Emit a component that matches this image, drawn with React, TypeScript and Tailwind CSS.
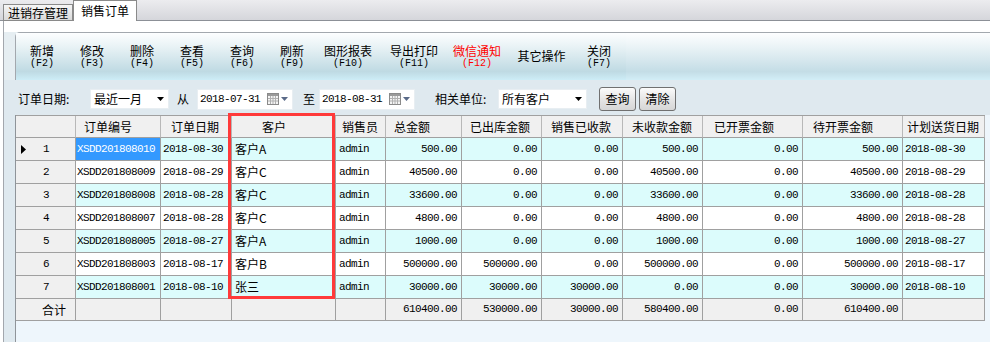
import React from "react";

const CJK = "font-['Noto_Sans_CJK_SC',sans-serif]";
const MONO = "font-['Liberation_Mono','Noto_Sans_CJK_SC',monospace] text-[11px] tracking-[-0.6px]";

const TOOLS = [
  { label: "新增", key: "(F2)", w: "w-[50px]" },
  { label: "修改", key: "(F3)", w: "w-[50px]" },
  { label: "删除", key: "(F4)", w: "w-[50px]" },
  { label: "查看", key: "(F5)", w: "w-[50px]" },
  { label: "查询", key: "(F6)", w: "w-[50px]" },
  { label: "刷新", key: "(F9)", w: "w-[50px]" },
  { label: "图形报表", key: "(F10)", w: "w-[62px]" },
  { label: "导出打印", key: "(F11)", w: "w-[70px]" },
  { label: "微信通知", key: "(F12)", w: "w-[56px]", red: true },
  { label: "其它操作", key: "", w: "w-[73px]" },
  { label: "关闭", key: "(F7)", w: "w-[42px]" },
];

const HEADERS = [
  { t: "", pl: "pl-0" },
  { t: "订单编号", pl: "pl-[8px]" },
  { t: "订单日期", pl: "pl-[10px]" },
  { t: "客户", pl: "pl-[30px]" },
  { t: "销售员", pl: "pl-[6px]" },
  { t: "总金额", pl: "pl-[8px]" },
  { t: "已出库金额", pl: "pl-[8px]" },
  { t: "销售已收款", pl: "pl-[9px]" },
  { t: "未收款金额", pl: "pl-[9px]" },
  { t: "已开票金额", pl: "pl-[11px]" },
  { t: "待开票金额", pl: "pl-[10px]" },
  { t: "计划送货日期", pl: "pl-[4px]" },
];

const ROWS = [
  ["XSDD201808010", "2018-08-30", "客户A", "500.00", "0.00", "0.00", "500.00", "0.00", "500.00", "2018-08-30"],
  ["XSDD201808009", "2018-08-29", "客户C", "40500.00", "0.00", "0.00", "40500.00", "0.00", "40500.00", "2018-08-29"],
  ["XSDD201808008", "2018-08-28", "客户C", "33600.00", "0.00", "0.00", "33600.00", "0.00", "33600.00", "2018-08-28"],
  ["XSDD201808007", "2018-08-28", "客户C", "4800.00", "0.00", "0.00", "4800.00", "0.00", "4800.00", "2018-08-28"],
  ["XSDD201808005", "2018-08-27", "客户A", "1000.00", "0.00", "0.00", "1000.00", "0.00", "1000.00", "2018-08-27"],
  ["XSDD201808003", "2018-08-17", "客户B", "500000.00", "500000.00", "0.00", "500000.00", "0.00", "500000.00", "2018-08-17"],
  ["XSDD201808001", "2018-08-10", "张三", "30000.00", "30000.00", "30000.00", "0.00", "0.00", "30000.00", "2018-08-10"],
];

const TOTALS = ["610400.00", "530000.00", "30000.00", "580400.00", "0.00", "610400.00"];

const GRID =
  "grid grid-cols-[60px_85px_71px_104px_50px_76px_80px_81px_80px_100px_100px_82px]";
const CELL = "border-r border-b border-[#a0a0a0] flex items-center overflow-hidden whitespace-nowrap";

function DownArrow({ color = "#000" }: { color?: string }) {
  return (
    <svg width="7" height="4" viewBox="0 0 7 4">
      <path d="M0 0H7L3.5 4Z" fill={color} />
    </svg>
  );
}

function CalendarIcon() {
  return (
    <span className="flex items-center gap-[2px]">
      <svg width="12" height="12" viewBox="0 0 12 12">
        <rect x="0.5" y="0.5" width="11" height="11" fill="#f4f4f4" stroke="#8a8a8a" />
        <rect x="1" y="1" width="10" height="2" fill="#9a9a9a" />
        <path d="M1 5.5H11M1 8H11M3.5 3V11M6 3V11M8.5 3V11" stroke="#b0b0b0" strokeWidth="1" />
      </svg>
      <DownArrow color="#5a6a88" />
    </span>
  );
}

function Select({ text, w }: { text: string; w: string }) {
  return (
    <div className={`${w} h-[20px] bg-white border border-[#e8eef2] flex items-center justify-between pl-[3px] pr-[4px]`}>
      <span className={`${CJK} text-[12px]`}>{text}</span>
      <DownArrow />
    </div>
  );
}

function DateBox({ value }: { value: string }) {
  return (
    <div className="w-[96px] h-[21px] bg-white border border-[#e8eef2] flex items-center justify-between pl-[2px] pr-[4px]">
      <span className={MONO}>{value}</span>
      <CalendarIcon />
    </div>
  );
}

function Btn({ text }: { text: string }) {
  return (
    <button className="w-[37px] h-[24px] rounded-[3px] border border-[#707070] bg-[linear-gradient(to_bottom,#fbfbfb,#e4e4e4_55%,#d6d6d6)] flex items-center justify-center">
      <span className={`${CJK} text-[12px]`}>{text}</span>
    </button>
  );
}

export default function App() {
  return (
    <div className={`w-[990px] h-[342px] overflow-hidden bg-white flex flex-col text-[12px] text-black ${CJK}`}>
      {/* tabs */}
      <div className="h-[21px] shrink-0 flex items-end bg-[linear-gradient(to_bottom,#ececef,#d5d6db)] border-b border-[#8c9097] pl-[3px]">
        <div className="h-[17px] mb-[-1px] px-[4px] border border-[#8a8a8a] bg-[linear-gradient(to_bottom,#f6f6f6,#d9d9d9)] flex items-center">
          <span className="text-[12px] leading-none">进销存管理</span>
        </div>
        <div className="h-[21px] mb-[-1px] w-[64px] border border-b-0 border-[#8a8a8a] bg-white flex items-center justify-center">
          <span className="text-[12px] leading-none">销售订单</span>
        </div>
      </div>

      <div className="flex flex-1 min-h-0">
        <div className="w-[3px] bg-white" />
        <div className="flex-1 flex flex-col border-l border-[#a3a7ad] bg-[#e2ecf1] min-h-0">
          <div className="h-[11px] bg-white shrink-0" />
          {/* toolbar */}
          <div className="pl-[11px] bg-[#e6eef2] shrink-0">
            <div className="h-[48px] rounded-tl-[5px] border-t border-l border-[#a3a8ae] flex bg-[linear-gradient(to_bottom,#fdfeff_0%,#eaf3f6_30%,#c4dde6_82%,#d2eef7_100%)]">
              <div className="flex pl-[1px] w-[610px] bg-[linear-gradient(to_bottom,#fdfeff_0%,#e8f2f5_30%,#bfdae3_82%,#cdedf7_100%)]">
                {TOOLS.map((t) => (
                  <div
                    key={t.label}
                    className={`${t.w} h-full flex flex-col items-center justify-center ${t.red ? "text-[#ff0000]" : "text-black"}`}
                  >
                    <span className="block h-[13px] text-[12px] leading-[12px]">{t.label}</span>
                    {t.key && (
                      <span className="block h-[10px] mt-[1px] font-['Liberation_Mono',monospace] text-[10px] leading-[10px]">
                        {t.key}
                      </span>
                    )}
                  </div>
                ))}
              </div>
            </div>
          </div>

          {/* filter */}
          <div className="h-[35px] shrink-0 pt-[7px] pb-[4px] pl-[14px] flex items-center bg-[#dfe9ef]">
            <span className="text-[12px] w-[72px]">订单日期:</span>
            <Select text="最近一月" w="w-[79px]" />
            <span className="ml-[8px] w-[20px] text-[12px]">从</span>
            <DateBox value="2018-07-31" />
            <span className="ml-[10px] w-[16px] text-[12px]">至</span>
            <DateBox value="2018-08-31" />
            <span className="ml-[20px] w-[63px] text-[12px]">相关单位:</span>
            <Select text="所有客户" w="w-[89px]" />
            <div className="ml-[12px] flex gap-[3px]">
              <Btn text="查询" />
              <Btn text="清除" />
            </div>
          </div>

          {/* grid */}
          <div className="flex-1 flex bg-[#dfe9ef] pl-[11px] min-h-0">
            <div className="flex-1 bg-[#eef6fc] border-l border-[#8f9499] relative">
              <div className={`${GRID} w-[969px] border-t border-[#a0a0a0]`}>
                {HEADERS.map((h, i) => (
                  <div key={i} className={`${CELL} h-[22px] bg-[#f0f0f0] ${h.pl} border-r-[#b8b8b8]`}>
                    <span className="text-[12px]">{h.t}</span>
                  </div>
                ))}
                {ROWS.map((r, ri) => {
                  const bg = ri % 2 === 0 ? "bg-[#dcfcfc]" : "bg-white";
                  return (
                    <React.Fragment key={ri}>
                      <div className={`${CELL} h-[23px] bg-[#f0f0f0] pl-[5px]`}>
                        <span className="w-[22px] flex items-center">
                          {ri === 0 && (
                            <svg width="5" height="9" viewBox="0 0 5 9">
                              <path d="M0 0L5 4.5L0 9Z" fill="#000" />
                            </svg>
                          )}
                        </span>
                        <span className={MONO}>{ri + 1}</span>
                      </div>
                      <div
                        className={`${CELL} h-[23px] pl-[1px] ${ri === 0 ? "bg-[#3399ff] text-white" : bg}`}
                      >
                        <span className={MONO}>{r[0]}</span>
                      </div>
                      <div className={`${CELL} h-[23px] pl-[2px] ${bg}`}>
                        <span className={MONO}>{r[1]}</span>
                      </div>
                      <div className={`${CELL} h-[23px] pl-[3px] ${bg}`}>
                        <span className="text-[12px]">{r[2]}</span>
                      </div>
                      <div className={`${CELL} h-[23px] pl-[3px] ${bg}`}>
                        <span className={MONO}>admin</span>
                      </div>
                      {r.slice(3, 9).map((v, vi) => (
                        <div key={vi} className={`${CELL} h-[23px] justify-end pr-[4px] ${bg}`}>
                          <span className={MONO}>{v}</span>
                        </div>
                      ))}
                      <div className={`${CELL} h-[23px] pl-[2px] ${bg}`}>
                        <span className={MONO}>{r[9]}</span>
                      </div>
                    </React.Fragment>
                  );
                })}
                <div className={`${CELL} h-[22px] bg-[#f0f0f0] pl-[26px]`}>
                  <span className="text-[12px]">合计</span>
                </div>
                {[0, 1, 2, 3].map((i) => (
                  <div key={i} className={`${CELL} h-[22px] bg-[#f0f0f0]`} />
                ))}
                {TOTALS.map((v, i) => (
                  <div key={i} className={`${CELL} h-[22px] justify-end pr-[4px] bg-[#f0f0f0]`}>
                    <span className={MONO}>{v}</span>
                  </div>
                ))}
                <div className={`${CELL} h-[22px] bg-[#f0f0f0]`} />
              </div>
              {/* highlight box */}
              <div className="absolute left-[212px] top-[-2px] w-[107px] h-[186px] border-[3px] border-[#ff3a3a] pointer-events-none" />
            </div>
          </div>
        </div>
      </div>
    </div>
  );
}
